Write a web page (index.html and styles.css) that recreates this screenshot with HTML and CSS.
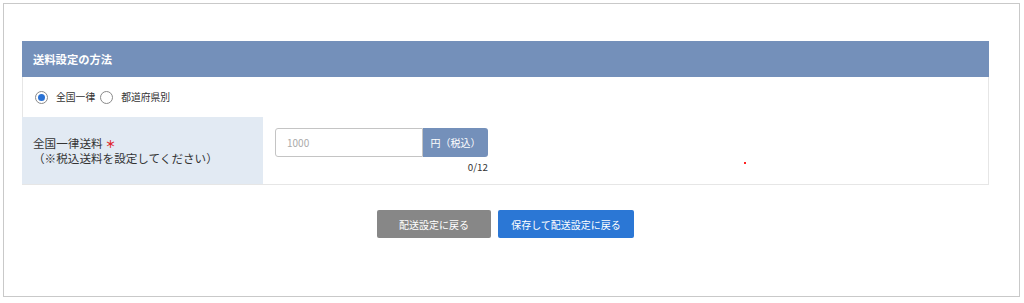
FILE: index.html
```html
<html>

<head>
  <meta charset="utf-8" />
  <title>送料設定</title>
  <link rel="stylesheet" href="styles.css">
</head>

<body>
  <div class="frame">
    <div class="panel">
      <div class="panel-head">送料設定の方法</div>

      <div class="radio-row">
        <label class="radio"><span class="radio-mark checked"></span>全国一律</label>
        <label class="radio"><span class="radio-mark"></span>都道府県別</label>
      </div>

      <div class="field-row">
        <div class="field-label">
          <div>全国一律送料 <span class="req">＊</span></div>
          <div>（※税込送料を設定してください）</div>
        </div>
        <div class="field-body">
          <div class="input-group">
            <input class="price" type="text" placeholder="1000" />
            <span class="addon">円（税込）</span>
          </div>
          <div class="counter">0/12</div>
        </div>
        <span class="dot"></span>
      </div>
    </div>

    <div class="actions">
      <button class="btn btn-back">配送設定に戻る</button>
      <button class="btn btn-save">保存して配送設定に戻る</button>
    </div>
  </div>
</body>

</html>
```

FILE: styles.css
```css
body {
  margin: 0;
  font-family: "Noto Sans CJK JP", "Noto Sans", sans-serif;
  color: #333;
  background: #fff;
}

.frame {
  box-sizing: border-box;
  margin: 3px 4px 0 3px;
  height: 294px;
  border: 1px solid #c9c9c9;
  padding: 37px 30px 0 18px;
}

.panel-head {
  background-color: #7490ba;
  color: white;
  height: 36px;
  line-height: 36px;
  padding-left: 11px;
  font-size: 11.3px;
  font-weight: 700;
}

.radio-row {
  height: 40px;
  display: flex;
  align-items: center;
  padding-left: 12px;
  border-left: 1px solid #e6e6e6;
  border-right: 1px solid #e6e6e6;
  font-size: 9.8px;
}

.radio {
  display: flex;
  align-items: center;
  margin-right: 5px;
}

.radio-mark {
  width: 11px;
  height: 11px;
  border: 1px solid #8a8a8a;
  border-radius: 50%;
  margin-right: 8px;
  display: flex;
  align-items: center;
  justify-content: center;
}

.radio-mark.checked::after {
  content: "";
  width: 7px;
  height: 7px;
  border-radius: 50%;
  background: #2a72d5;
}

.field-row {
  position: relative;
  display: flex;
  height: 67px;
  border: 1px solid #e6e6e6;
  border-top: none;
  border-left: none;
}

.field-label {
  width: 230px;
  background-color: #e2eaf3;
  padding-left: 11px;
  display: flex;
  flex-direction: column;
  justify-content: center;
  font-size: 11.6px;
  line-height: 15px;
}

.req {
  color: #e0262b;
  font-size: 10.5px;
  font-weight: 700;
}

.field-body {
  padding: 11px 0 0 12px;
}

.input-group {
  display: flex;
  width: 213px;
  height: 29px;
}

.price {
  width: 148px;
  border: 1px solid #c4c4c4;
  border-radius: 3px 0 0 3px;
  padding: 0 11px;
  font-family: "Noto Sans CJK JP", sans-serif;
  font-size: 10px;
  outline: none;
}

.price::placeholder {
  color: #aaa;
}

.addon {
  flex: 1;
  background-color: #7490ba;
  color: white;
  border-radius: 0 3px 3px 0;
  font-size: 10px;
  line-height: 29px;
  text-align: center;
}

.counter {
  width: 213px;
  text-align: right;
  font-size: 9.8px;
  margin-top: 3px;
}

.dot {
  position: absolute;
  left: 722px;
  top: 45px;
  width: 2px;
  height: 2px;
  background: #f22;
}

.actions {
  display: flex;
  justify-content: center;
  gap: 7px;
  margin-top: 25px;
}

.btn {
  height: 28px;
  border: none;
  border-radius: 2px;
  color: white;
  font-family: "Noto Sans CJK JP", sans-serif;
  font-size: 10px;
}

.btn-back {
  width: 114px;
  background-color: #878787;
}

.btn-save {
  width: 136px;
  background-color: #2b77d5;
}
```
